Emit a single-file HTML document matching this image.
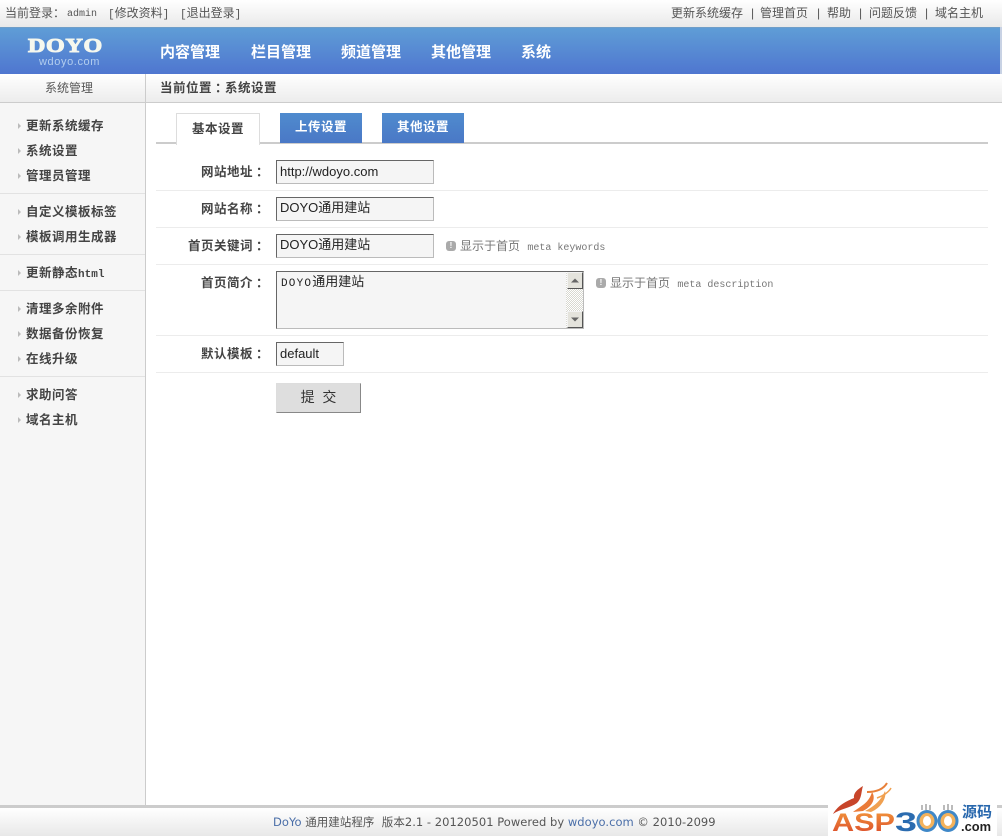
<!DOCTYPE html>
<html lang="zh"><head><meta charset="utf-8"><title>系统设置</title>
<style>
*{box-sizing:border-box}
html,body{margin:0;padding:0;width:1002px;height:836px;overflow:hidden;background:#fff}
body{position:relative;font:12px "Liberation Sans","WenQuanYi Zen Hei","Noto Sans CJK SC",sans-serif;color:#444}
.a{position:absolute;white-space:nowrap}
.m{font-family:"Liberation Mono","WenQuanYi Zen Hei",monospace}
.c{position:relative;left:3px}
#top{left:0;top:0;width:1002px;height:27px;background:linear-gradient(#fff,#e9e9e9)}
.t{top:5px;line-height:16px;color:#555}
#nav{left:0;top:27px;width:1000px;height:47px;background:linear-gradient(#5f9dd6,#4f76d0);border-top:1px solid #6f9ec8}
.n{top:42px;font-size:15px;font-weight:bold;color:#fff;line-height:20px}
#sh{left:0;top:74px;width:1002px;height:29px;background:linear-gradient(#fff,#ececec);border-bottom:1px solid #ccc}
#side{left:0;top:103px;width:146px;height:702px;background:#f6f6f6;border-right:1px solid #ccc}
.s{left:26px;font-weight:bold;font-size:12.5px;letter-spacing:.5px;color:#444;line-height:16px}
.ar{left:18px;width:0;height:0;border-left:3px solid #bbb;border-top:3px solid transparent;border-bottom:3px solid transparent}
.hr{left:0;width:145px;height:1px;background:#e2e2e2}
.rl{left:156px;width:832px;height:1px;background:#ececec}
.lb{width:66px;left:200px;text-align:right;font-weight:bold;font-size:12.5px;letter-spacing:.5px;color:#444;line-height:16px}
.in{left:276px;background:#f5f5f5;border:1px solid #bbb;border-top-color:#666;border-left-color:#666;font-size:13px;color:#222;padding:2px 3px;line-height:17px;height:24px;white-space:nowrap}
.up{padding-top:1px}
.tab{top:113px;width:82px;height:30px;background:linear-gradient(#4f8bce,#4a78c6);color:#fff;font-weight:bold;text-align:center;line-height:29px;font-size:12.5px;letter-spacing:.5px}
.tip{color:#777;font-size:12px;line-height:16px}
.tip .m{font-size:10px;margin-left:4px}
.ic{width:10px;height:10px;border-radius:3px;background:#aaa;color:#fff;font:bold 8px/10px "Liberation Sans",sans-serif;text-align:center}
#foot{left:0;top:805px;width:1002px;height:31px;background:linear-gradient(#fff,#e8e8e8);border-top:3px solid #ccc}
</style></head><body>
<div class="a" id="top"></div>
<div class="a t" style="left:5px">当前登录：</div>
<div class="a t m" style="left:67px;top:7px;font-size:10px">admin</div>
<div class="a t" style="left:108px"><span class="m" style="font-size:11px">[</span>修改资料<span class="m" style="font-size:11px">]</span></div>
<div class="a t" style="left:180px"><span class="m" style="font-size:11px">[</span>退出登录<span class="m" style="font-size:11px">]</span></div>
<div class="a t" style="left:671px">更新系统缓存</div>
<div class="a t" style="left:751px">|</div>
<div class="a t" style="left:760px">管理首页</div>
<div class="a t" style="left:817px">|</div>
<div class="a t" style="left:827px">帮助</div>
<div class="a t" style="left:859px">|</div>
<div class="a t" style="left:869px">问题反馈</div>
<div class="a t" style="left:925px">|</div>
<div class="a t" style="left:935px">域名主机</div>

<div class="a" id="nav"></div>
<div class="a" style="left:1000px;top:27px;width:2px;height:47px;background:#c8d2e4"></div>
<div class="a" style="left:28px;top:35px;font:bold 20px/22px 'Liberation Serif',serif;color:#f6f8ee;-webkit-text-stroke:1px #f6f8ee;letter-spacing:.6px;transform:scaleX(1.2);transform-origin:left">DOYO</div>
<div class="a" style="left:39px;top:56px;font-size:11px;line-height:13px;letter-spacing:.6px;color:#b2cdee">wdoyo.com</div>
<div class="a n" style="left:160px;top:43px">内容管理</div>
<div class="a n" style="left:251px;top:43px">栏目管理</div>
<div class="a n" style="left:341px;top:43px">频道管理</div>
<div class="a n" style="left:431px;top:43px">其他管理</div>
<div class="a n" style="left:521px;top:43px">系统</div>

<div class="a" id="sh"></div>
<div class="a" style="left:145px;top:74px;width:1px;height:29px;background:#ccc"></div>
<div class="a" style="left:45px;top:80px;line-height:16px;color:#555">系统管理</div>
<div class="a" style="left:160px;top:80px;line-height:16px;font-weight:bold;font-size:12.5px;letter-spacing:.5px;color:#444">当前位置<span class="c">：</span>系统设置</div>

<div class="a" id="side"></div>
<i class="a ar" style="top:123px"></i><div class="a s" style="top:118px">更新系统缓存</div>
<i class="a ar" style="top:148px"></i><div class="a s" style="top:143px">系统设置</div>
<i class="a ar" style="top:173px"></i><div class="a s" style="top:168px">管理员管理</div>
<div class="a hr" style="top:193px"></div>
<i class="a ar" style="top:209px"></i><div class="a s" style="top:204px">自定义模板标签</div>
<i class="a ar" style="top:234px"></i><div class="a s" style="top:229px">模板调用生成器</div>
<div class="a hr" style="top:254px"></div>
<i class="a ar" style="top:270px"></i><div class="a s" style="top:265px">更新静态<span class="m" style="font-size:11px;letter-spacing:0">html</span></div>
<div class="a hr" style="top:290px"></div>
<i class="a ar" style="top:306px"></i><div class="a s" style="top:301px">清理多余附件</div>
<i class="a ar" style="top:331px"></i><div class="a s" style="top:326px">数据备份恢复</div>
<i class="a ar" style="top:356px"></i><div class="a s" style="top:351px">在线升级</div>
<div class="a hr" style="top:376px"></div>
<i class="a ar" style="top:392px"></i><div class="a s" style="top:387px">求助问答</div>
<i class="a ar" style="top:417px"></i><div class="a s" style="top:412px">域名主机</div>

<div class="a" style="left:156px;top:142px;width:832px;height:2px;background:#ccc"></div>
<div class="a" style="left:176px;top:113px;width:84px;height:32px;background:#fff;border:1px solid #ddd;border-bottom:0;text-align:center;line-height:30px;font-weight:bold;font-size:12.5px;letter-spacing:.5px;color:#444">基本设置</div>
<div class="a tab" style="left:280px">上传设置</div>
<div class="a tab" style="left:382px">其他设置</div>

<div class="a lb" style="top:164px">网站地址<span class="c">：</span></div>
<div class="a in" style="top:160px;width:158px">http://wdoyo.com</div>
<div class="a rl" style="top:190px"></div>
<div class="a lb" style="top:201px">网站名称<span class="c">：</span></div>
<div class="a in up" style="top:197px;width:158px">DOYO通用建站</div>
<div class="a rl" style="top:227px"></div>
<div class="a lb" style="top:238px;left:174px;width:92px">首页关键词<span class="c">：</span></div>
<div class="a in up" style="top:234px;width:158px">DOYO通用建站</div>
<div class="a ic" style="left:446px;top:241px">!</div>
<div class="a tip" style="left:460px;top:238px">显示于首页 <span class="m">meta keywords</span></div>
<div class="a rl" style="top:264px"></div>
<div class="a lb" style="top:275px">首页简介<span class="c">：</span></div>
<div class="a in" style="top:271px;width:308px;height:58px;padding:1px 4px"><span class="m" style="font-size:11px;letter-spacing:1.2px">DOYO</span>通用建站</div>
<div class="a" style="left:566px;top:272px;width:17px;height:56px;background:repeating-conic-gradient(#d8d8d0 0 25%,#fff 0 50%) 0 0/2px 2px"></div>
<div class="a" style="left:567px;top:272px;width:16px;height:17px;background:#e4e3dc;border:1px solid #f2f2f2;border-right-color:#555;border-bottom-color:#555"><svg width="14" height="15" style="display:block"><path d="M3 9.5L7 5.5L11 9.5Z" fill="#666"/></svg></div>
<div class="a" style="left:567px;top:311px;width:16px;height:17px;background:#e4e3dc;border:1px solid #f2f2f2;border-right-color:#555;border-bottom-color:#555"><svg width="14" height="15" style="display:block"><path d="M3 5.5L7 9.5L11 5.5Z" fill="#666"/></svg></div>
<div class="a ic" style="left:596px;top:278px">!</div>
<div class="a tip" style="left:610px;top:275px">显示于首页 <span class="m">meta description</span></div>
<div class="a rl" style="top:335px"></div>
<div class="a lb" style="top:346px">默认模板<span class="c">：</span></div>
<div class="a in" style="top:342px;width:68px">default</div>
<div class="a rl" style="top:372px"></div>
<div class="a" style="left:276px;top:383px;width:85px;height:30px;background:#dedede;border:1px solid #ddd;border-right-color:#888;border-bottom-color:#888;text-align:center;line-height:27px;font-size:14px;color:#333">提&nbsp;&nbsp;交</div>

<div class="a" id="foot"></div>
<div class="a" style="left:273px;top:814px;line-height:16px;font-family:'DejaVu Sans','WenQuanYi Zen Hei',sans-serif;font-size:11.5px;letter-spacing:.03px;color:#555"><span style="color:#4a6ea8">DoYo</span> 通用建站程序&nbsp; 版本2.1 - 20120501 Powered by <span style="color:#4a6ea8">wdoyo.com</span> © 2010-2099</div>

<svg class="a" style="left:825px;top:778px" width="177" height="58" viewBox="0 0 177 58">
<defs><linearGradient id="g" x1="0" y1="0" x2="0" y2="1"><stop offset="0" stop-color="#f39a3c"/><stop offset="1" stop-color="#d9452a"/></linearGradient></defs>
<rect x="3" y="24" width="169" height="34" fill="#fff"/>
<path d="M8 36C13 27 22 23 29 20C28 15 33 11 38 8C36 14 37 20 32 25C25 30 15 31 8 36Z" fill="#c8452a"/>
<path d="M28 34C36 28 44 25 47 14C51 20 48 28 38 33Z" fill="#ea7a38"/>
<path d="M40 33C50 28 56 22 60 13C62 20 56 30 46 34Z" fill="#f0a050"/>
<path d="M42 14C50 14 58 12 62 5" fill="none" stroke="#e8803a" stroke-width="2"/>
<path d="M52 20C58 18 64 14 66 10" fill="none" stroke="#f0a050" stroke-width="1.5"/>
<text x="7" y="53" font-family="Liberation Sans,sans-serif" font-weight="bold" font-size="25" fill="url(#g)" textLength="63" lengthAdjust="spacingAndGlyphs">ASP</text>
<text x="70" y="53" font-family="Liberation Sans,sans-serif" font-weight="bold" font-size="27" fill="#2b6cb0" textLength="22" lengthAdjust="spacingAndGlyphs">3</text>
<ellipse cx="102" cy="43" rx="9" ry="9.5" fill="#f3b25c" stroke="#3f88c8" stroke-width="3"/><ellipse cx="102" cy="43" rx="4" ry="5" fill="#fff"/>
<ellipse cx="123" cy="43" rx="9" ry="9.5" fill="#f3b25c" stroke="#3f88c8" stroke-width="3"/><ellipse cx="123" cy="43" rx="4" ry="5" fill="#fff"/>
<path d="M97 32V27M101 32V26M105 32V27M119 32V27M123 32V26M127 32V27" stroke="#777" stroke-width="1" fill="none"/>
<text x="137" y="39" font-family="WenQuanYi Zen Hei,Noto Sans CJK SC,sans-serif" font-weight="bold" font-size="15" fill="#2767ad">源码</text>
<text x="136" y="53" font-family="Liberation Sans,sans-serif" font-weight="bold" font-size="13" fill="#222" textLength="30" lengthAdjust="spacingAndGlyphs">.com</text>
</svg>
</body></html>
